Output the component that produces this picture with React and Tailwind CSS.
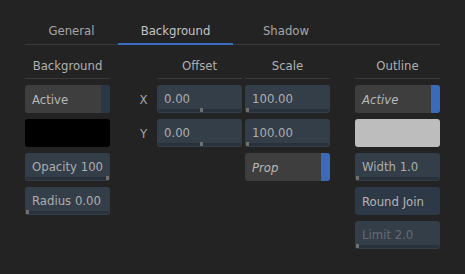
import React from 'react';

const font = { fontFamily: '"DejaVu Sans Condensed", "DejaVu Sans", sans-serif' };

const Tab = ({ label, active, width }) => (
  <div
    className={`flex justify-center pt-[23px] text-[13px] leading-[16px] ${width} ${
      active ? 'text-[#c4c4c4] border-b-2 border-[#3c6cbf] -mb-px' : 'text-[#a6a6a6]'
    }`}
  >
    {label}
  </div>
);

const Header = ({ label, width }) => (
  <div
    className={`flex h-[34px] items-end justify-center border-b border-[#3a3a3a] pb-[4px] text-[13px] leading-[16px] text-[#b0b0b0] ${width}`}
  >
    {label}
  </div>
);

// number field with slider track along the bottom
const NumField = ({ text, pos, dim }) => (
  <div className="flex h-[28px] w-[85px] flex-col rounded-[3px] bg-[#343e49]">
    <div
      className={`flex flex-1 items-center px-[7px] pt-[4px] text-[13px] leading-[16px] ${
        dim ? 'text-[#646a71]' : 'text-[#adadad]'
      }`}
    >
      {text}
    </div>
    <div className="mx-[1px] mb-[1px] flex h-[3px] items-end rounded-b-[2px] bg-[#29313a]">
      <div className="h-[3px] w-full" style={{ paddingLeft: `${pos}%` }}>
        <div className="h-[4px] w-[3px] -translate-y-[1px] bg-[#6f6f6f]" style={{ marginLeft: pos === 100 ? '-3px' : '0' }} />
      </div>
    </div>
  </div>
);

const Toggle = ({ text, italic, on }) => (
  <div className="flex h-[28px] w-[85px] overflow-hidden rounded-[3px] bg-[#3e3e3e]">
    <div
      className={`flex flex-1 items-center px-[7px] pt-[2px] text-[13px] leading-[16px] text-[#b8b8b8] ${
        italic ? 'italic' : ''
      }`}
    >
      {text}
    </div>
    <div className={`w-[9px] ${on ? 'bg-[#3a6ab8]' : 'bg-[#2c3746]'}`} />
  </div>
);

const Swatch = ({ color }) => <div className={`h-[28px] w-[85px] rounded-[3px] ${color}`} />;

const Plain = ({ text }) => (
  <div className="flex h-[28px] w-[85px] items-center rounded-[3px] bg-[#2e3947] px-[7px] pt-[2px] text-[13px] leading-[16px] text-[#b4b4b4]">
    {text}
  </div>
);

export default function App() {
  return (
    <div className="h-[274px] w-[465px] overflow-hidden bg-[#232323] px-[25px]" style={font}>
      <div className="flex h-[45px] w-[415px] border-b border-[#3a3a3a]">
        <Tab label="General" width="w-[93px]" />
        <Tab label="Background" width="w-[115px]" active />
        <Tab label="Shadow" width="w-[106px]" />
      </div>

      <div className="flex">
        <div className="flex w-[85px] flex-col gap-[6px]">
          <Header label="Background" width="w-[85px]" />
          <Toggle text="Active" />
          <Swatch color="bg-black" />
          <NumField text="Opacity 100" pos={100} />
          <NumField text="Radius 0.00" pos={0} />
        </div>

        <div className="ml-[20px] flex w-[27px] flex-col gap-[6px]">
          <div className="h-[34px]" />
          <div className="flex h-[28px] items-center justify-center pt-[2px] text-[13px] text-[#a6a6a6]">X</div>
          <div className="flex h-[28px] items-center justify-center pt-[2px] text-[13px] text-[#a6a6a6]">Y</div>
        </div>

        <div className="flex w-[85px] flex-col gap-[6px]">
          <Header label="Offset" width="w-[85px]" />
          <NumField text="0.00" pos={50} />
          <NumField text="0.00" pos={50} />
        </div>

        <div className="ml-[3px] flex w-[85px] flex-col gap-[6px]">
          <Header label="Scale" width="w-[85px]" />
          <NumField text="100.00" pos={0} />
          <NumField text="100.00" pos={0} />
          <Toggle text="Prop" italic on />
        </div>

        <div className="ml-[25px] flex w-[85px] flex-col gap-[6px]">
          <Header label="Outline" width="w-[85px]" />
          <Toggle text="Active" italic on />
          <Swatch color="bg-[#bdbdbd]" />
          <NumField text="Width 1.0" pos={0} />
          <Plain text="Round Join" />
          <NumField text="Limit 2.0" pos={0} dim />
        </div>
      </div>
    </div>
  );
}
